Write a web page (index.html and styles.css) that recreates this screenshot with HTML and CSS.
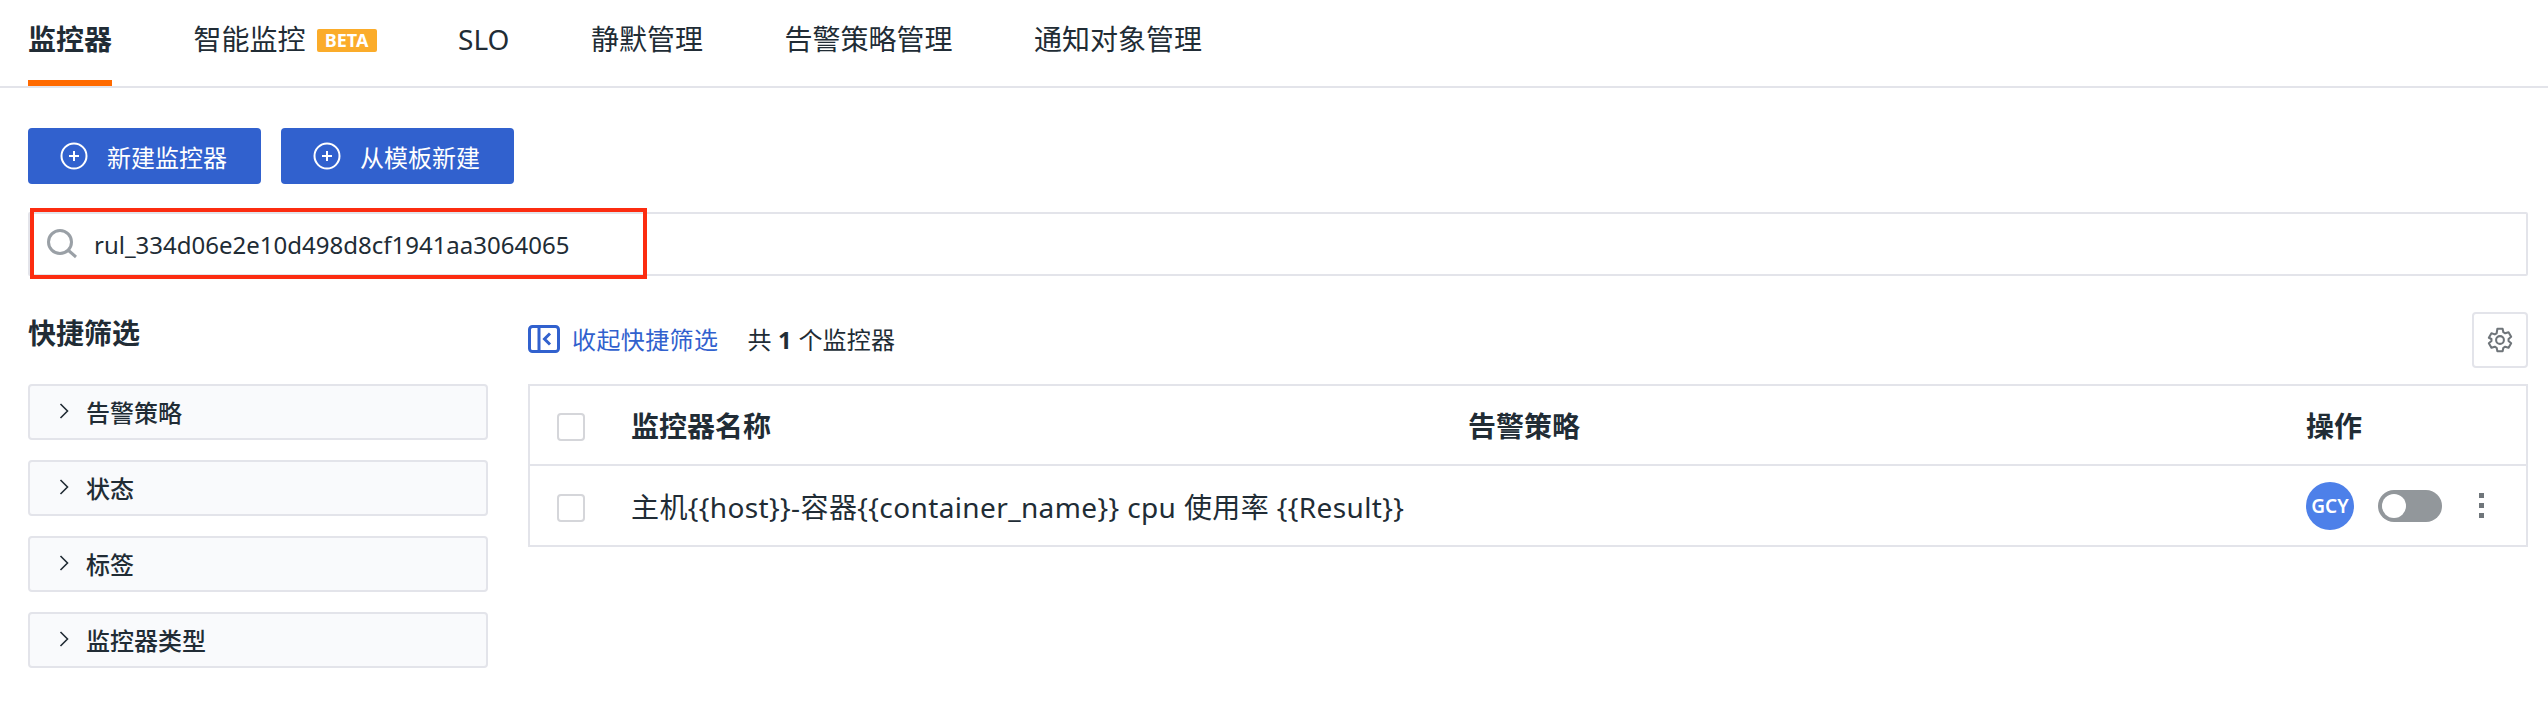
FILE: index.html
```html
<!DOCTYPE html>
<html lang="zh-CN">
<head>
    <meta charset="UTF-8">
    <title>监控器</title>
    <link rel="stylesheet" href="styles.css">
</head>
<body>

    <!-- Tabs -->
    <nav class="tabs">
        <a class="tab active">监控器</a>
        <a class="tab">智能监控<span class="beta">BETA</span></a>
        <a class="tab">SLO</a>
        <a class="tab">静默管理</a>
        <a class="tab">告警策略管理</a>
        <a class="tab">通知对象管理</a>
    </nav>

    <div class="toolbar">
        <button class="btn">
            <svg class="btn-icon" viewBox="0 0 28 28"><circle cx="14" cy="14" r="12.5"/><path d="M14 9v10M9 14h10"/></svg>
            新建监控器
        </button>
        <button class="btn">
            <svg class="btn-icon" viewBox="0 0 28 28"><circle cx="14" cy="14" r="12.5"/><path d="M14 9v10M9 14h10"/></svg>
            从模板新建
        </button>
    </div>

    <div class="search">
        <svg class="search-icon" viewBox="0 0 32 32"><circle cx="14" cy="14" r="11.5"/><path d="M22.5 22.5L30 29"/></svg>
        <span class="search-text">rul_334d06e2e10d498d8cf1941aa3064065</span>
        <div class="red-box"></div>
    </div>

    <div class="main">
        <!-- Quick filters -->
        <aside class="filters">
            <h2 class="filters-title">快捷筛选</h2>
            <div class="filter-item"><svg class="chevron" viewBox="0 0 10 16"><path d="M1.5 1l7 7-7 7"/></svg>告警策略</div>
            <div class="filter-item"><svg class="chevron" viewBox="0 0 10 16"><path d="M1.5 1l7 7-7 7"/></svg>状态</div>
            <div class="filter-item"><svg class="chevron" viewBox="0 0 10 16"><path d="M1.5 1l7 7-7 7"/></svg>标签</div>
            <div class="filter-item"><svg class="chevron" viewBox="0 0 10 16"><path d="M1.5 1l7 7-7 7"/></svg>监控器类型</div>
        </aside>

        <section class="content">
            <div class="content-head">
                <svg class="collapse-icon" viewBox="0 0 32 28"><rect x="1.5" y="1.5" width="29" height="25" rx="3"/><path d="M11 2v24M22 8.5l-5.5 5.5 5.5 5.5"/></svg>
                <a class="collapse-link">收起快捷筛选</a>
                <span class="total">共 <b>1</b> 个监控器</span>
                <button class="gear-btn">
                    <svg viewBox="0 0 24 24" class="gear"><path d="M9.6 1.6h4.8l.7 3.2 1.7 1 3.1-1 2.4 4.2-2.4 2.1v1.8l2.4 2.1-2.4 4.2-3.1-1-1.7 1-.7 3.2H9.6l-.7-3.2-1.7-1-3.1 1-2.4-4.2 2.4-2.1v-1.8L1.7 9.9 4.1 5.8l3.1 1 1.7-1z"/><circle cx="12" cy="12" r="3.6"/></svg>
                </button>
            </div>

            <div class="table">
                <div class="row head">
                    <span class="checkbox"></span>
                    <span class="col-name">监控器名称</span>
                    <span class="col-policy">告警策略</span>
                    <span class="col-action">操作</span>
                </div>
                <div class="row">
                    <span class="checkbox"></span>
                    <span class="col-name">主机{{host}}-容器{{container_name}} cpu 使用率 {{Result}}</span>
                    <span class="col-policy"></span>
                    <span class="col-action">
                        <span class="avatar">GCY</span>
                        <span class="toggle"><span class="knob"></span></span>
                        <span class="more"><i></i><i></i><i></i></span>
                    </span>
                </div>
            </div>
        </section>
    </div>

</body>
</html>
```

FILE: styles.css
```css
* {
    box-sizing: border-box;
}

body {
    margin: 0;
    height: 704px;
    overflow: hidden;
    background: #fff;
    color: #212c35;
    font-family: "Noto Sans", "Noto Sans CJK SC", sans-serif;
}

.tabs {
    display: flex;
    gap: 81.5px;
    height: 88px;
    padding: 0 28px;
    border-bottom: 2px solid #e3e4ea;
}

.tab {
    height: 86px;
    padding-top: 19px;
    font-size: 28px;
    line-height: 40px;
    white-space: nowrap;
}

.tab.active {
    font-weight: 700;
    border-bottom: 6px solid #ff6a00;
}

.beta {
    display: inline-block;
    margin-left: 11px;
    width: 60px;
    height: 23px;
    border-radius: 2px;
    background: #fbac2a;
    color: #fff;
    font-size: 18px;
    font-weight: 700;
    line-height: 23px;
    text-align: center;
    vertical-align: 3px;
}

.toolbar {
    display: flex;
    gap: 20px;
    padding: 40px 28px 0;
}

.btn {
    display: flex;
    align-items: center;
    gap: 19px;
    width: 233px;
    height: 56px;
    padding: 0 0 0 32px;
    border: none;
    border-radius: 4px;
    background: #3161ce;
    color: #fff;
    font-family: inherit;
    font-size: 24px;
    cursor: pointer;
}

.btn-icon {
    width: 28px;
    height: 28px;
    fill: none;
    stroke: #fff;
    stroke-width: 2;
}

.search {
    position: relative;
    display: flex;
    align-items: center;
    height: 64px;
    margin: 28px 20px 0 28px;
    padding-left: 16px;
    border: 2px solid #e3e4ea;
    border-radius: 2px;
}

.search-icon {
    width: 32px;
    height: 32px;
    fill: none;
    stroke: #9aa0a6;
    stroke-width: 3;
}

.search-text {
    margin-left: 16px;
    font-size: 24px;
}

.red-box {
    position: absolute;
    top: -6px;
    left: 0;
    width: 617px;
    height: 71px;
    border: 4px solid #fc2c10;
}

.main {
    display: flex;
    gap: 40px;
    padding: 0 20px 0 28px;
}

.filters {
    width: 460px;
    flex: none;
}

.filters-title {
    margin: 0 0 31px;
    padding-top: 37px;
    font-size: 28px;
    font-weight: 700;
    line-height: 40px;
}

.filter-item {
    display: flex;
    align-items: center;
    height: 56px;
    margin-bottom: 20px;
    padding-bottom: 2px;
    padding-left: 29px;
    border: 2px solid #e3e4ea;
    border-radius: 4px;
    background: #f9fafc;
    font-size: 24px;
    font-weight: 500;
}

.chevron {
    width: 10px;
    height: 16px;
    margin-right: 17px;
    fill: none;
    stroke: #212c35;
    stroke-width: 1.6;
}

.content {
    flex: 1;
    min-width: 0;
}

.content-head {
    display: flex;
    align-items: center;
    height: 108px;
    padding-top: 36px;
    padding-bottom: 16px;
}

.collapse-icon {
    width: 32px;
    height: 28px;
    margin-bottom: 2px;
    fill: none;
    stroke: #3161ce;
    stroke-width: 3;
}

.collapse-link {
    margin-bottom: 3px;
    margin-left: 12px;
    color: #3161ce;
    font-size: 24px;
    letter-spacing: 0.4px;
}

.total {
    margin-bottom: 3px;
    margin-left: 29px;
    font-size: 24px;
    letter-spacing: 0.2px;
}

.gear-btn {
    display: flex;
    align-items: center;
    justify-content: center;
    width: 56px;
    height: 56px;
    margin-left: auto;
    padding: 0;
    border: 2px solid #e3e4ea;
    border-radius: 4px;
    background: #fff;
}

.gear {
    width: 26px;
    height: 26px;
    fill: none;
    stroke: #6f757a;
    stroke-width: 1.9;
    stroke-linejoin: round;
}

.table {
    border: 2px solid #e3e4ea;
}

.row {
    display: flex;
    align-items: center;
    height: 79px;
    padding-left: 27px;
    font-size: 28px;
    letter-spacing: 0.38px;
}

.row.head {
    height: 80px;
    border-bottom: 2px solid #e3e4ea;
    font-weight: 700;
    letter-spacing: 0;
}

.checkbox {
    flex: none;
    width: 28px;
    height: 28px;
    margin-top: 4px;
    margin-right: 46px;
    border: 2px solid #d5d6da;
    border-radius: 4px;
}

.col-name {
    width: 837px;
    flex: none;
    white-space: nowrap;
}

.col-policy {
    width: 838px;
    flex: none;
}

.col-action {
    display: flex;
    align-items: center;
}

.avatar {
    width: 48px;
    height: 48px;
    border-radius: 50%;
    background: #4d80e9;
    color: #fff;
    font-size: 19px;
    font-weight: 600;
    letter-spacing: 0;
    line-height: 48px;
    text-align: center;
}

.toggle {
    width: 64px;
    height: 32px;
    margin-left: 24px;
    padding: 4px;
    border-radius: 16px;
    background: #92979b;
}

.knob {
    display: block;
    width: 24px;
    height: 24px;
    border-radius: 50%;
    background: #fff;
}

.more {
    display: flex;
    flex-direction: column;
    gap: 5px;
    margin-left: 37px;
}

.more i {
    display: block;
    width: 5px;
    height: 5px;
    background: #6f757a;
}
```
